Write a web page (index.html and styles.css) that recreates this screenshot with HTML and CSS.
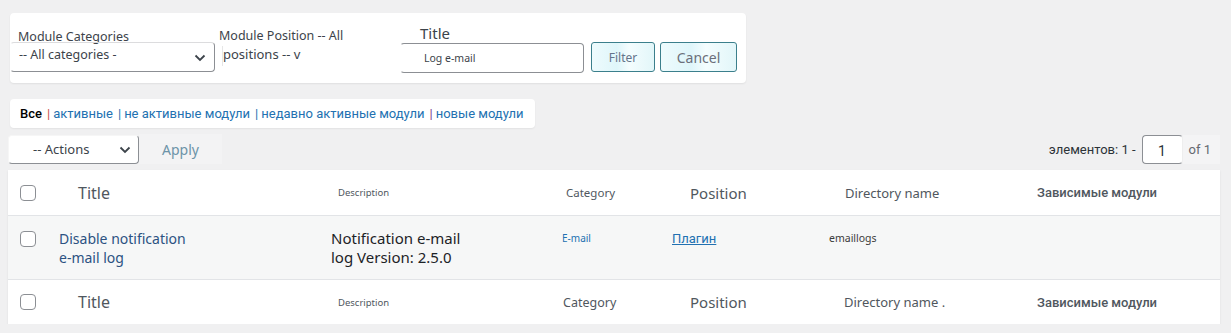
FILE: index.html
```html
<!DOCTYPE html>
<html lang="ru">
<head>
  <meta charset="UTF-8">
  <title>Modules</title>
  <link rel="stylesheet" href="styles.css">
</head>
<body>
  <div class="page">
    <!-- фильтр -->
    <form class="filters">
      <div class="fgroup fg-cat">
        <label class="flabel">Module Categories</label>
        <div class="fselect">-- All categories -<span class="chev"><svg width="12" height="8" viewBox="0 0 12 8"><path d="M1.5 1.5L6 6l4.5-4.5" fill="none" stroke="#3c434a" stroke-width="1.8"/></svg></span></div>
      </div>
      <div class="fgroup fg-pos">
        <label class="flabel">Module Position -- All</label>
        <div class="fpos">positions -- v</div>
      </div>
      <div class="fgroup fg-title">
        <label class="flabel flabel-title">Title</label>
        <div class="finput">Log e-mail</div>
      </div>
      <button type="button" class="fbtn fbtn-filter">Filter</button>
      <button type="button" class="fbtn fbtn-cancel">Cancel</button>
    </form>

    <!-- статусы -->
    <ul class="subsubsub">
      <li class="current">Все</li>
      <li><span class="sep sep-red">|</span><a href="#">активные</a></li>
      <li><span class="sep sep-blue">|</span><a href="#">не активные модули</a></li>
      <li><span class="sep sep-blue">|</span><a href="#">недавно активные модули</a></li>
      <li><span class="sep sep-purple">|</span><a href="#">новые модули</a></li>
    </ul>

    <div class="tablenav">
      <div class="bulk">
        <div class="actions-select">-- Actions<span class="chev"><svg width="12" height="8" viewBox="0 0 12 8"><path d="M1.5 1.5L6 6l4.5-4.5" fill="none" stroke="#3c434a" stroke-width="1.8"/></svg></span></div>
        <button type="button" class="apply">Apply</button>
      </div>
      <div class="pages">
        <span class="pages-label">элементов: 1 -</span>
        <span class="page-input">1</span>
        <span class="pages-of">of 1</span>
      </div>
    </div>

    <!-- таблица -->
    <div class="table">
      <div class="trow thead">
        <div class="cell c-check"><span class="cb"></span></div>
        <div class="cell c-title h-title">Title</div>
        <div class="cell c-desc h-desc">Description</div>
        <div class="cell c-cat h-cat">Category</div>
        <div class="cell c-pos h-pos">Position</div>
        <div class="cell c-dir h-dir">Directory name</div>
        <div class="cell c-dep h-dep">Зависимые модули</div>
      </div>
      <div class="trow tbody">
        <div class="cell c-check"><span class="cb"></span></div>
        <div class="cell c-title r-title"><a href="#">Disable notification<br>e-mail log</a></div>
        <div class="cell c-desc r-desc">Notification e-mail<br>log Version: 2.5.0</div>
        <div class="cell c-cat r-cat">E-mail</div>
        <div class="cell c-pos r-pos"><a href="#">Плагин</a></div>
        <div class="cell c-dir r-dir">emaillogs</div>
        <div class="cell c-dep"></div>
      </div>
      <div class="trow tfoot">
        <div class="cell c-check"><span class="cb"></span></div>
        <div class="cell c-title h-title">Title</div>
        <div class="cell c-desc h-desc">Description</div>
        <div class="cell c-cat f-cat">Category</div>
        <div class="cell c-pos h-pos">Position</div>
        <div class="cell c-dir f-dir">Directory name .</div>
        <div class="cell c-dep h-dep">Зависимые модули</div>
      </div>
    </div>
  </div>
</body>
</html>
```

FILE: styles.css
```css
*, *::before, *::after {
  box-sizing: border-box;
}
body {
  margin: 0;
  background: #f0f0f1;
  font-family: "Noto Sans", "Open Sans", sans-serif;
  color: #3c434a;
}
.page {
  padding: 13px 11px 0 8px;
}

/* фильтр */
.filters {
  display: flex;
  align-items: flex-start;
  width: 736px;
  height: 70px;
  margin: 0 0 16px 2px;
  background: #fff;
  border-radius: 4px;
  box-shadow: 0 1px 2px rgba(0,0,0,0.07);
}
.fgroup {
  display: flex;
  flex-direction: column;
}
.flabel {
  font-size: 12.5px;
  line-height: 16px;
  color: #3c434a;
  white-space: nowrap;
}
.fg-cat {
  width: 209px;
  padding-top: 16px;
}
.fg-cat .flabel {
  padding-left: 8px;
  margin-bottom: -3px;
}
.fselect {
  position: relative;
  width: 205px;
  height: 30px;
  padding: 2px 0 0 8px;
  border: 1px solid #8c8f94;
  border-top-color: #dcdcde;
  border-left-color: #fff;
  border-radius: 4px;
  font-size: 12.5px;
  line-height: 20px;
}
.chev {
  position: absolute;
  right: 8px;
  top: 11px;
  line-height: 0;
}
.fg-pos {
  width: 181px;
  padding-top: 15px;
}
.fpos {
  margin: 2px 0 0 3px;
  height: 20px;
  font-size: 13px;
  line-height: 16px;
  border-left: 1px solid #e6e6e6;
}
.fg-title {
  width: 184px;
  padding-top: 11px;
}
.flabel-title {
  padding-left: 20px;
  font-size: 15px;
  line-height: 18px;
  margin-bottom: 1px;
}
.finput {
  height: 30px;
  padding-left: 23px;
  border: 1px solid #8c8f94;
  border-left-color: #fff;
  border-radius: 4px;
  font-size: 10.5px;
  line-height: 28px;
  color: #3c434a;
}
.fbtn {
  height: 30px;
  margin-top: 29px;
  border: 1px solid #3b7f8c;
  border-radius: 3px;
  background: linear-gradient(90deg, #eefbfd, #dff6fa 40%, #f4fdfe 60%, #e2f6f9);
  font-family: inherit;
  color: #64748b;
  padding: 0;
}
.fbtn-filter {
  width: 64px;
  margin-left: 7px;
  font-size: 12px;
}
.fbtn-cancel {
  width: 77px;
  margin-left: 5px;
  font-size: 14px;
  color: #6b6f7a;
}

/* статусы */
.subsubsub {
  display: flex;
  list-style: none;
  width: 525px;
  height: 29px;
  margin: 0 0 6px 2px;
  padding: 0 0 0 10px;
  align-items: center;
  background: #fff;
  border-radius: 4px;
  box-shadow: 0 1px 2px rgba(0,0,0,0.06);
  font-family: Roboto, "Liberation Sans", sans-serif;
  font-size: 13px;
}
.subsubsub .current {
  color: #000;
  font-weight: 500;
}
.subsubsub a {
  color: #2271b1;
  text-decoration: none;
}
.sep {
  margin: 0 3px 0 5px;
}
.sep-red { color: #c9524a; }
.sep-blue { color: #2271b1; }
.sep-purple { color: #7b3f8c; }

/* навигация */
.tablenav {
  display: flex;
  justify-content: space-between;
  align-items: center;
  height: 30px;
  margin-bottom: 6px;
}
.bulk {
  display: flex;
  align-items: center;
}
.actions-select {
  position: relative;
  width: 131px;
  height: 29px;
  padding-left: 24px;
  border: 1px solid #8c8f94;
  border-top-color: #f6f6f6;
  border-left-color: #f6f6f6;
  border-radius: 4px;
  background: #fff;
  font-size: 13px;
  line-height: 27px;
  color: #3c434a;
}
.actions-select .chev {
  top: 10px;
  right: 7px;
}
.apply {
  width: 83px;
  height: 30px;
  border: none;
  background: #f3f3f4;
  font-family: inherit;
  font-size: 14px;
  color: #6d93a8;
}
.pages {
  display: flex;
  align-items: center;
  font-family: Roboto, "Liberation Sans", sans-serif;
  font-size: 13px;
  color: #2c3338;
}
.page-input {
  width: 41px;
  height: 29px;
  margin-left: 6px;
  border: 1px solid #8c8f94;
  border-right-color: #eee;
  border-radius: 4px;
  background: #fff;
  text-align: center;
  line-height: 31px;
  font-size: 14px;
}
.pages-of {
  padding: 0 9px 0 6px;
  background: #f4f4f5;
  color: #646970;
  line-height: 29px;
}

/* таблица */
.table {
  width: 1212px;
  background: #fff;
  box-shadow: 0 1px 2px rgba(0,0,0,0.08);
}
.trow {
  display: grid;
  grid-template-columns: 42px 280px 225px 110px 155px 210px 1fr;
}
.thead {
  height: 46px;
  align-items: center;
  border-bottom: 1px solid #e2e4e7;
}
.tbody {
  height: 64px;
  align-items: start;
  padding-top: 13px;
  background: #f6f7f7;
  border-bottom: 1px solid #e2e4e7;
}
.tfoot {
  height: 44px;
  align-items: center;
}
.c-check {
  padding-left: 12px;
  line-height: 0;
}
.tbody .c-check {
  padding-top: 2px;
}
.cb {
  display: inline-block;
  width: 16px;
  height: 16px;
  border: 1px solid #8c8f94;
  border-radius: 4px;
  background: #fff;
}
.h-title {
  padding-left: 28px;
  font-size: 16px;
  color: #50575e;
}
.h-desc {
  padding-left: 8px;
  font-size: 9.5px;
  color: #50575e;
}
.h-cat {
  padding-left: 11px;
  font-size: 11.5px;
  color: #50575e;
}
.f-cat {
  padding-left: 8px;
  font-size: 12.5px;
  color: #50575e;
}
.h-pos {
  padding-left: 25px;
  font-size: 15px;
  color: #50575e;
}
.h-dir {
  padding-left: 25px;
  font-size: 13px;
  color: #50575e;
}
.f-dir {
  padding-left: 24px;
  font-size: 13px;
  color: #50575e;
}
.h-dep {
  padding-left: 7px;
  font-family: Roboto, "Liberation Sans", sans-serif;
  font-weight: 500;
  font-size: 13px;
  color: #50575e;
}
.r-title {
  padding-left: 9px;
  font-size: 14px;
  line-height: 19px;
}
.r-title a {
  color: #2c5282;
  text-decoration: none;
}
.r-desc {
  padding-left: 1px;
  font-size: 15px;
  line-height: 19px;
  color: #1d2327;
}
.r-cat {
  padding-left: 7px;
  font-size: 10px;
  line-height: 19px;
  color: #2271b1;
}
.r-pos {
  padding-left: 7px;
  font-family: Roboto, "Liberation Sans", sans-serif;
  font-size: 13px;
  line-height: 19px;
}
.r-pos a {
  color: #2271b1;
}
.r-dir {
  padding-left: 9px;
  font-size: 10.5px;
  line-height: 19px;
  color: #3c3c3c;
}
```
